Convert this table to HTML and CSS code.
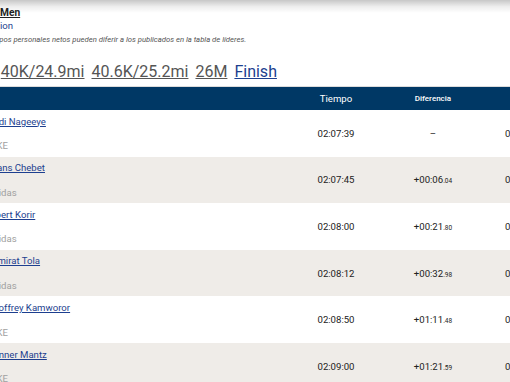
FILE: index.html
```html
<!DOCTYPE html>
<html lang="es">
<head>
<meta charset="utf-8">
<title>Resultados</title>
<link rel="stylesheet" href="styles.css">
</head>
<body>
<div class="topshade"></div>
<header class="intro">
  <h1 class="title">Men</h1>
  <a class="race" href="#">ion</a>
  <p class="note">Tiempos personales netos pueden diferir a los publicados en la tabla de líderes.</p>
  <nav class="splits">
    <a href="#">35K/21.7mi</a>
    <a href="#">40K/24.9mi</a>
    <a href="#">40.6K/25.2mi</a>
    <a href="#">26M</a>
    <a href="#" class="current">Finish</a>
  </nav>
</header>
<section class="results">
  <div class="thead">
    <span class="c-name"></span>
    <span class="c-time">Tiempo</span>
    <span class="c-diff">Diferencia</span>
    <span class="c-next">Ritmo</span>
  </div>
  <div class="row">
    <div class="c-name"><a href="#">Abdi Nageeye</a><span class="team">NIKE</span></div>
    <div class="c-time">02:07:39</div>
    <div class="c-diff">–</div>
    <div class="c-next">02:07:39</div>
  </div>
  <div class="row alt">
    <div class="c-name"><a href="#">Evans Chebet</a><span class="team">Adidas</span></div>
    <div class="c-time">02:07:45</div>
    <div class="c-diff">+00:06<small>.04</small></div>
    <div class="c-next">02:07:45</div>
  </div>
  <div class="row">
    <div class="c-name"><a href="#">Albert Korir</a><span class="team">Adidas</span></div>
    <div class="c-time">02:08:00</div>
    <div class="c-diff">+00:21<small>.80</small></div>
    <div class="c-next">02:08:00</div>
  </div>
  <div class="row alt">
    <div class="c-name"><a href="#">Tamirat Tola</a><span class="team">Adidas</span></div>
    <div class="c-time">02:08:12</div>
    <div class="c-diff">+00:32<small>.98</small></div>
    <div class="c-next">02:08:12</div>
  </div>
  <div class="row">
    <div class="c-name"><a href="#">Geoffrey Kamworor</a><span class="team">NIKE</span></div>
    <div class="c-time">02:08:50</div>
    <div class="c-diff">+01:11<small>.48</small></div>
    <div class="c-next">02:08:50</div>
  </div>
  <div class="row alt">
    <div class="c-name"><a href="#">Conner Mantz</a><span class="team">NIKE</span></div>
    <div class="c-time">02:09:00</div>
    <div class="c-diff">+01:21<small>.59</small></div>
    <div class="c-next">02:09:00</div>
  </div>
</section>
</body>
</html>
```
FILE: styles.css
```css
html, body {
  margin: 0;
  padding: 0;
  background: #fff;
  overflow: hidden;
}
body {
  font-family: Roboto, "Liberation Sans", Arial, sans-serif;
  color: #222;
  width: 510px;
  height: 382px;
  position: relative;
}
.topshade {
  position: absolute;
  left: 0;
  top: 0;
  width: 100%;
  height: 13px;
  background: linear-gradient(rgba(0,0,0,0.22), rgba(0,0,0,0.07) 50%, rgba(0,0,0,0));
  z-index: 5;
}
.intro {
  padding-top: 6.5px;
}
.title {
  margin: 0;
  font-size: 10.2px;
  line-height: 12px;
  font-weight: 700;
  color: #222;
  text-decoration: underline;
}
.race {
  display: block;
  margin-top: 1.7px;
  font-size: 9.6px;
  line-height: 12px;
  color: #1d3f8f;
  text-decoration: none;
}
.note {
  margin: 3.2px 0 0;
  font-size: 7.7px;
  line-height: 10px;
  font-style: italic;
  color: #555;
  text-indent: -17.5px;
  white-space: nowrap;
}
.splits {
  display: flex;
  gap: 7px;
  margin-top: 16.6px;
  margin-left: -90px;
  font-size: 16px;
  line-height: 20px;
  white-space: nowrap;
}
.splits a {
  color: #555;
  text-decoration: underline;
}
.splits a.current {
  color: #1d3f8f;
}
.results {
  margin-top: 4px;
  margin-left: -13px;
  width: 600px;
  border-top: 1px solid #dcdcdc;
}
.thead, .row {
  display: grid;
  grid-template-columns: 303px 92px 102px 79px;
  align-items: center;
}
.thead {
  height: 23px;
  background: #003865;
  color: #fff;
  font-size: 9.6px;
}
.thead .c-diff {
  font-size: 8px;
  font-weight: 500;
}
.c-time, .c-diff, .c-next {
  text-align: center;
}
.row {
  height: 46.6px;
  font-size: 9.6px;
  color: #222;
}
.row.alt {
  background: #efece8;
}
.row .c-name {
  display: flex;
  flex-direction: column;
  align-self: start;
  padding-top: 5.7px;
  line-height: 12px;
}
.row .c-name a {
  color: #1d3f8f;
  text-decoration: underline;
}
.team {
  margin-top: 12.5px;
  color: #a0a0a0;
}
.c-diff small {
  font-size: 6.5px;
}
```
